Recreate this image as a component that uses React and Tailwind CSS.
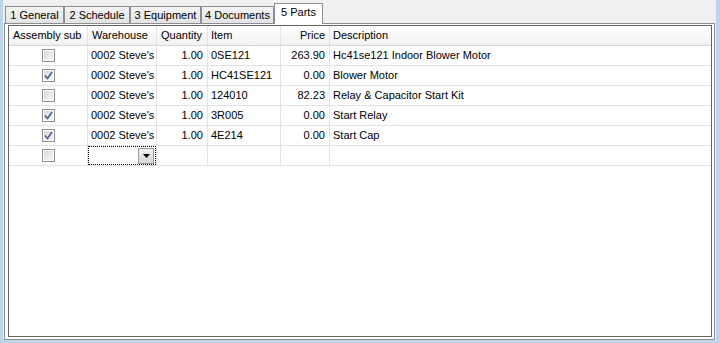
import React from 'react';

const tabs = [
  { label: '1 General', w: 'w-[59px]' },
  { label: '2 Schedule', w: 'w-[66px]' },
  { label: '3 Equipment', w: 'w-[71px]' },
  { label: '4 Documents', w: 'w-[73px]' },
];

const rows = [
  { sub: false, wh: "0002 Steve's", qty: '1.00', item: '0SE121', price: '263.90', desc: 'Hc41se121 Indoor Blower Motor' },
  { sub: true, wh: "0002 Steve's", qty: '1.00', item: 'HC41SE121', price: '0.00', desc: 'Blower Motor' },
  { sub: false, wh: "0002 Steve's", qty: '1.00', item: '124010', price: '82.23', desc: 'Relay & Capacitor Start Kit' },
  { sub: true, wh: "0002 Steve's", qty: '1.00', item: '3R005', price: '0.00', desc: 'Start Relay' },
  { sub: true, wh: "0002 Steve's", qty: '1.00', item: '4E214', price: '0.00', desc: 'Start Cap' },
];

const CheckBox = ({ checked }) => (
  <div className="w-[13px] h-[13px] border border-[#8f8f8f] bg-white p-[1px]">
    <div className="w-full h-full bg-gradient-to-br from-[#d9d9d9] to-[#f7f7f7] flex items-center justify-center">
      {checked && (
        <svg width="9" height="9" viewBox="0 0 9 9">
          <path d="M1 4.5 L3.5 7.5 L8 1" fill="none" stroke="#4b5f93" strokeWidth="1.6" />
        </svg>
      )}
    </div>
  </div>
);

const Row = ({ children }) => (
  <div className="flex h-[20px] border-b border-[#e2e2e2]">{children}</div>
);

const App = () => {
  return (
    <div className="w-[720px] h-[343px] bg-[#bfd4ea] flex pl-[3px] pr-[4px] pb-[3px] font-['Liberation_Sans',Arial,sans-serif] text-[11px] text-black leading-none">
      <div className="flex-1 bg-[#f0f0f0] flex flex-col px-[1px]">
        {/* tab strip */}
        <div className="h-[23px] flex items-end pl-[1px]">
          {tabs.map(t => (
            <div
              key={t.label}
              className={`${t.w} h-[17px] border border-b-0 border-[#8c8e94] bg-gradient-to-b from-[#f3f3f3] to-[#e3e3e3] flex items-center justify-center`}
            >
              {t.label}
            </div>
          ))}
          <div className="w-[49px] h-[21px] -mb-[1px] relative z-10 border border-b-0 border-[#8c8e94] bg-white flex items-start justify-center pt-[3px]">
            5 Parts
          </div>
        </div>

        {/* tab page */}
        <div className="flex-1 border border-[#8c8e94] bg-white pl-[3px] pt-[1px] pr-[2px] pb-[2px] flex">
          <div className="flex-1 border border-[#646464] bg-white flex flex-col">
            {/* header */}
            <div className="flex h-[20px] border-b border-[#d5d5d5] bg-gradient-to-b from-white to-[#f1f1f1]">
              <div className="w-[79px] border-r border-[#e4e4e4] flex items-center pl-[4px]">Assembly sub</div>
              <div className="w-[69px] border-r border-[#e4e4e4] flex items-center pl-[4px]">Warehouse</div>
              <div className="w-[51px] border-r border-[#e4e4e4] flex items-center pl-[4px]">Quantity</div>
              <div className="w-[73px] border-r border-[#e4e4e4] flex items-center pl-[3px]">Item</div>
              <div className="w-[49px] border-r border-[#e4e4e4] flex items-center justify-end pr-[4px]">Price</div>
              <div className="flex-1 flex items-center pl-[3px]">Description</div>
            </div>

            {rows.map((r, i) => (
              <Row key={i}>
                <div className="w-[79px] border-r border-[#e2e2e2] flex items-center justify-center">
                  <CheckBox checked={r.sub} />
                </div>
                <div className="w-[69px] border-r border-[#e2e2e2] flex items-center pl-[3px]">{r.wh}</div>
                <div className="w-[51px] border-r border-[#e2e2e2] flex items-center justify-end pr-[4px]">{r.qty}</div>
                <div className="w-[73px] border-r border-[#e2e2e2] flex items-center pl-[3px]">{r.item}</div>
                <div className="w-[49px] border-r border-[#e2e2e2] flex items-center justify-end pr-[4px]">{r.price}</div>
                <div className="flex-1 flex items-center pl-[3px]">{r.desc}</div>
              </Row>
            ))}

            {/* new row */}
            <Row>
              <div className="w-[79px] border-r border-[#e2e2e2] flex items-center justify-center">
                <CheckBox checked={false} />
              </div>
              <div className="w-[69px] border-r border-[#e2e2e2] p-0 flex">
                <div className="flex-1 border border-dotted border-black flex items-center justify-end pr-[1px]">
                  <div className="w-[16px] h-[16px] border border-[#9a9a9a] bg-gradient-to-b from-[#f2f2f2] to-[#d6d6d6] flex items-center justify-center">
                    <svg width="7" height="4" viewBox="0 0 7 4">
                      <path d="M0 0 H7 L3.5 4 Z" fill="#000" />
                    </svg>
                  </div>
                </div>
              </div>
              <div className="w-[51px] border-r border-[#e2e2e2]" />
              <div className="w-[73px] border-r border-[#e2e2e2]" />
              <div className="w-[49px] border-r border-[#e2e2e2]" />
              <div className="flex-1" />
            </Row>
          </div>
        </div>
      </div>
    </div>
  );
};

export default App;
